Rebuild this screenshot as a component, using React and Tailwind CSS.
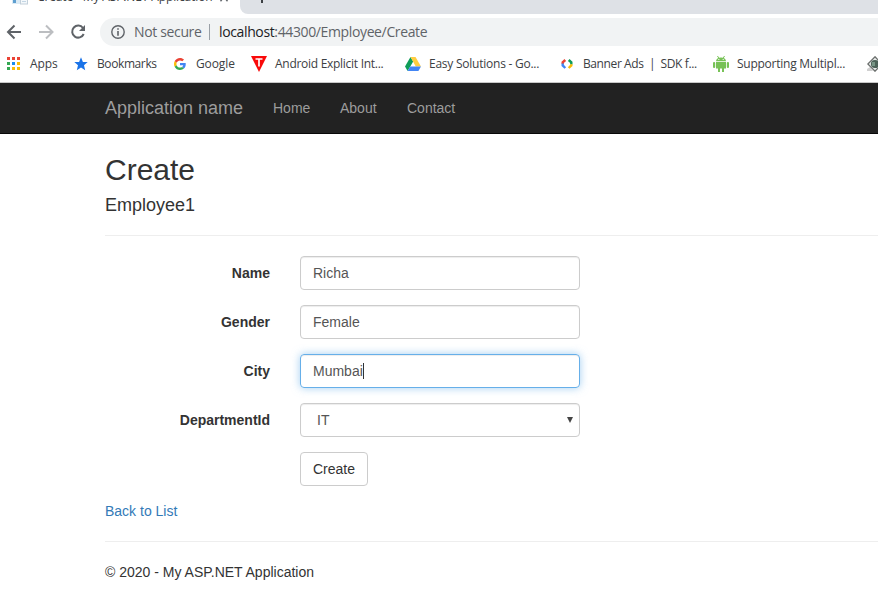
import React from "react";

const chromeFont = "font-['Open_Sans','Noto_Sans',sans-serif]";

function Favicon() {
  return (
    <svg width="17" height="5" viewBox="0 0 17 5" className="block shrink-0">
      <rect x="0" y="0" width="9" height="4" fill="#dcebf5" />
      <rect x="1" y="0" width="3" height="3" fill="#5f9fd0" />
      <rect x="8.500" y="-1" width="7" height="5" fill="#f4f8fb" stroke="#c3d0da" strokeWidth="1" />
      <rect x="10" y="1" width="4" height="1" fill="#c4d6e4" />
    </svg>
  );
}

function TabStrip() {
  return (
    <div className="flex h-[14px] overflow-hidden bg-white">
      <div className="flex h-full w-[240px] shrink-0 items-start pl-[12px]">
        <Favicon />
        <span className={`ml-[8px] -mt-[11px] block w-[175px] shrink-0 whitespace-nowrap text-[12px] leading-[16px] tracking-[-0.13px] text-[#3c4043] ${chromeFont}`}>
          Create - My ASP.NET Application
        </span>
        <svg width="10" height="4" viewBox="0 0 10 4" className="ml-[7px] shrink-0">
          <path d="M5 -3L8.500 1.200M5 -3L1.500 1.200" stroke="#5f6368" strokeWidth="1.400" />
        </svg>
      </div>
      <div className="flex h-full flex-1 rounded-bl-[8px] bg-[#dee1e6] pl-[21px]">
        <div className="h-[3px] w-[2px] bg-[#3c4043]" />
      </div>
    </div>
  );
}

function Toolbar() {
  return (
    <div className="flex h-[36px] items-center pl-[6px]">
      <svg width="88" height="20" viewBox="0 0 88 20" fill="none" className="shrink-0">
        <path d="M15 10H2.500M8.500 3.500L2 10L8.500 16.500" stroke="#5f6368" strokeWidth="2" />
        <path d="M33 10H46M40 3.500L46.500 10L40 16.500" stroke="#bcbec1" strokeWidth="2" />
        <path d="M77 6A6 6 0 1 0 77.700 12" stroke="#5f6368" strokeWidth="2" />
        <path d="M79 3V9H73Z" fill="#5f6368" />
      </svg>
      <div className={`ml-[6px] flex h-[28px] flex-1 items-center rounded-l-full bg-[#f1f3f4] pl-[11px] text-[14px] leading-[20px] ${chromeFont}`}>
        <svg width="14" height="14" viewBox="0 0 14 14" className="shrink-0">
          <circle cx="7" cy="7" r="6.2" fill="none" stroke="#5f6368" strokeWidth="1.4" />
          <path d="M7 3.300V4.800M7 6V10.700" stroke="#5f6368" strokeWidth="1.600" />
        </svg>
        <span className="ml-[9px] w-[75px] shrink-0 whitespace-nowrap tracking-[-0.35px] text-[#5f6368]">Not secure</span>
        <span className="h-[16px] w-px shrink-0 bg-[#9aa0a6]" />
        <span className="ml-[9px] whitespace-nowrap tracking-[-0.37px] text-[#5f6368]">
          <span className="text-[#202124]">localhost</span>:44300/Employee/Create
        </span>
      </div>
    </div>
  );
}

const appDots = [
  ["#ea4335", "#ea4335", "#ea4335"],
  ["#34a853", "#1a8cf0", "#fbbc05"],
  ["#34a853", "#fbbc05", "#fbbc05"],
];

function AppsIcon() {
  return (
    <svg width="13" height="13" viewBox="0 0 13 13">
      {appDots.map((row, r) =>
        row.map((c, i) => <rect key={`${r}${i}`} x={i * 5} y={r * 5} width="3" height="3" fill={c} />)
      )}
    </svg>
  );
}

function StarIcon() {
  return (
    <svg width="14" height="14" viewBox="0 0 14 14">
      <path d="M7 .3L8.900 4.900L13.700 5.100L10 8.300L11.200 13.200L7 10.500L2.800 13.200L4 8.300L.3 5.100L5.100 4.900Z" fill="#1a73e8" />
    </svg>
  );
}

function GoogleIcon() {
  return (
    <svg width="12" height="12" viewBox="0 0 48 48">
      <path fill="#EA4335" d="M24 9.500c3.540 0 6.710 1.220 9.210 3.600l6.850-6.850C35.900 2.380 30.470 0 24 0 14.620 0 6.510 5.380 2.560 13.220l7.980 6.190C12.430 13.720 17.740 9.500 24 9.500z" />
      <path fill="#4285F4" d="M46.980 24.550c0-1.570-.15-3.090-.38-4.550H24v9.020h12.940c-.58 2.960-2.260 5.480-4.780 7.180l7.730 6c4.510-4.180 7.090-10.360 7.090-17.650z" />
      <path fill="#FBBC05" d="M10.530 28.590c-.48-1.450-.76-2.990-.76-4.590s.27-3.140.76-4.590l-7.980-6.190C.92 16.460 0 20.120 0 24c0 3.880.92 7.540 2.560 10.780l7.970-6.190z" />
      <path fill="#34A853" d="M24 48c6.480 0 11.930-2.130 15.890-5.810l-7.730-6c-2.150 1.450-4.920 2.300-8.160 2.300-6.260 0-11.570-4.220-13.470-9.910l-7.980 6.190C6.510 42.620 14.620 48 24 48z" />
    </svg>
  );
}

function TriangleIcon() {
  return (
    <svg width="16" height="16" viewBox="0 0 16 16">
      <path d="M0 0H16L8 16Z" fill="#f90a0a" />
      <path d="M4.500 3H11.500M8 3V10.500" stroke="#fff" strokeWidth="1.700" />
    </svg>
  );
}

function DriveIcon() {
  return (
    <svg width="16" height="14" viewBox="0 0 16 14">
      <path d="M5.500 0L0 9.500L2.600 14L8.200 4.500Z" fill="#0f9d58" />
      <path d="M5.500 0H10.500L16 9.500H10.800Z" fill="#ffcd40" />
      <path d="M5.200 9.500H16L13.400 14H2.600Z" fill="#4285f4" />
    </svg>
  );
}

function DevelopersIcon() {
  return (
    <svg width="12" height="10" viewBox="0 0 12 10" fill="none" strokeWidth="2.400">
      <path d="M4.300 1L1.700 3.400V5" stroke="#ea4335" />
      <path d="M1.700 4.500V6.400L4.300 9" stroke="#4285f4" />
      <path d="M7.700 1L10.300 3.400V5.500" stroke="#0f9d58" />
      <path d="M10.300 5.300V6.400L7.700 9" stroke="#fbbc05" />
    </svg>
  );
}

function AndroidIcon() {
  return (
    <svg width="16" height="16" viewBox="0 0 16 16" fill="#78c257">
      <path d="M3 5.200C3 3 5 1.500 8 1.500S13 3 13 5.200Z" />
      <path d="M4.500 0L6 2.500M11.500 0L10 2.500" stroke="#78c257" />
      <path d="M3 6H13V12.500H11V16H9V12.500H7V16H5V12.500H3Z" />
      <rect x="0" y="6" width="2.200" height="6" rx="1" />
      <rect x="13.800" y="6" width="2.200" height="6" rx="1" />
      <rect x="5.300" y="3" width="1" height="1" fill="#fff" />
      <rect x="9.700" y="3" width="1" height="1" fill="#fff" />
    </svg>
  );
}

function DiamondIcon() {
  return (
    <svg width="16" height="16" viewBox="0 0 16 16">
      <path d="M0 13L3 11L6 15H0Z" fill="#d0d0d0" />
      <path d="M8 .8L15.200 8L8 15.200L.8 8Z" fill="#e8ebea" stroke="#6a6e6c" strokeWidth="1.300" />
      <circle cx="8" cy="8" r="4.100" fill="#4c6258" />
      <path d="M5 7H8M5 9H8" stroke="#a4c9b3" strokeWidth="1" />
    </svg>
  );
}

const bookmarks = [
  { icon: AppsIcon, label: "Apps", box: "w-[67px]", slot: "w-[23px]", track: "tracking-[-0.1px]" },
  { icon: StarIcon, label: "Bookmarks", box: "w-[100px]", slot: "w-[23px]", track: "tracking-[-0.4px]" },
  { icon: GoogleIcon, label: "Google", box: "w-[77px]", slot: "w-[22px]", track: "tracking-[-0.1px]" },
  { icon: TriangleIcon, label: "Android Explicit Int...", box: "w-[154px]", slot: "w-[24px]", track: "tracking-[-0.28px]" },
  { icon: DriveIcon, label: "Easy Solutions - Go...", box: "w-[156px]", slot: "w-[24px]", track: "tracking-[-0.24px]" },
  { icon: DevelopersIcon, label: "Banner Ads  |  SDK f...", box: "w-[152px]", slot: "w-[22px]", track: "tracking-[-0.4px]" },
  { icon: AndroidIcon, label: "Supporting Multipl...", box: "w-[154px]", slot: "w-[24px]", track: "tracking-[-0.25px]" },
];

function BookmarksBar() {
  return (
    <div className={`flex h-[33px] items-center overflow-hidden border-b border-[#c8c8c8] pb-[5px] pl-[7px] text-[12px] leading-[16px] text-[#3c4043] ${chromeFont}`}>
      {bookmarks.map(({ icon: Icon, label, box, slot, track }) => (
        <div key={label} className={`flex shrink-0 items-center ${box}`}>
          <div className={`shrink-0 ${slot}`}><Icon /></div>
          <span className={`whitespace-pre ${track}`}>{label}</span>
        </div>
      ))}
      <div className="shrink-0"><DiamondIcon /></div>
    </div>
  );
}

function Navbar() {
  return (
    <nav className="flex h-[51px] items-center border-b border-[#080808] bg-[#222] pl-[105px] text-[14px] leading-[20px] text-[#9d9d9d]">
      <span className="w-[168px] text-[18px]">Application name</span>
      <span className="w-[67px]">Home</span>
      <span className="w-[67px]">About</span>
      <span>Contact</span>
    </nav>
  );
}

function Row({ label, children }) {
  return (
    <div className="mb-[15px] flex h-[34px]">
      <label className="w-[165px] pt-[7px] text-right font-bold">{label}</label>
      <div className="ml-[30px] w-[280px]">{children}</div>
    </div>
  );
}

const control = "flex h-[34px] w-full items-center rounded-[4px] border px-[12px] text-[#555]";
const idle = "border-[#ccc] shadow-[inset_0_1px_1px_rgba(0,0,0,0.075)]";
const focused = "border-[#66afe9] shadow-[inset_0_1px_1px_rgba(0,0,0,0.075),0_0_8px_rgba(102,175,233,0.6)]";

export default function App() {
  return (
    <div className="h-[605px] w-[878px] overflow-hidden bg-white font-['Liberation_Sans',Arial,sans-serif] text-[14px] leading-[20px] text-[#333]">
      <TabStrip />
      <Toolbar />
      <BookmarksBar />
      <Navbar />
      <main className="pl-[105px]">
        <h2 className="pt-[19px] text-[30px] leading-[33px]">Create</h2>
        <h4 className="mt-[9px] text-[18px] leading-[20px]">Employee1</h4>
        <hr className="mt-[20px] mb-[20px] border-[#eee]" />
        <Row label="Name"><div className={`${control} ${idle}`}>Richa</div></Row>
        <Row label="Gender"><div className={`${control} ${idle}`}>Female</div></Row>
        <Row label="City">
          <div className={`${control} ${focused}`}>
            Mumbai<span className="h-[16px] w-px bg-[#333]" />
          </div>
        </Row>
        <Row label="DepartmentId">
          <div className={`${control} ${idle} justify-between pr-[6px] pl-[16px]`}>
            <span>IT</span>
            <svg width="6" height="6" viewBox="0 0 6 6"><path d="M0 0H6L3 6Z" fill="#444" /></svg>
          </div>
        </Row>
        <Row label="">
          <button className="flex h-[34px] w-[68px] items-center justify-center rounded-[4px] border border-[#ccc] bg-white">Create</button>
        </Row>
        <a className="block text-[#337ab7]">Back to List</a>
        <hr className="my-[20px] border-[#eee]" />
        <p>© 2020 - My ASP.NET Application</p>
      </main>
    </div>
  );
}
